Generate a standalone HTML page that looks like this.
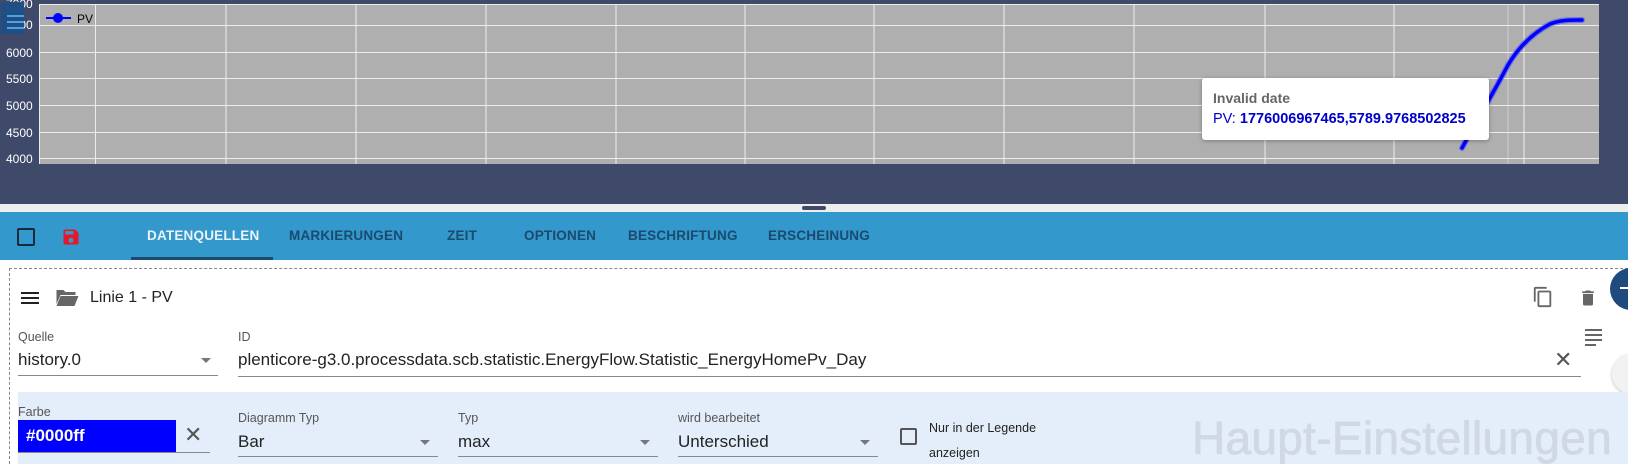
<!DOCTYPE html>
<html><head><meta charset="utf-8"><style>
*{box-sizing:border-box;margin:0;padding:0}
html,body{width:1628px;height:464px;overflow:hidden}
body{background:#fff;font-family:"Liberation Sans",Arial,sans-serif}
#w{position:relative;width:1628px;height:464px;overflow:hidden}
.a{position:absolute}
.tab{position:absolute;top:228px;font-size:13.5px;font-weight:bold;color:#1c4a6e;letter-spacing:.2px}
.lbl{position:absolute;font-size:12.5px;color:#555}
.val{position:absolute;font-size:17px;color:#222}
.ul{position:absolute;height:1px;background:#888}
.arr{position:absolute;width:0;height:0;border-left:5px solid transparent;border-right:5px solid transparent;border-top:5px solid #777}
</style></head><body><div id="w">
<div class="a" style="left:0;top:0;width:1628px;height:204px;background:#3f4a6a"></div>
<div class="a" style="left:0;top:204px;width:1628px;height:8px;background:#eeeeee"></div>
<div class="a" style="left:802px;top:206px;width:24px;height:4px;border-radius:2px;background:#3f4a6a"></div>
<svg class="a" style="left:0;top:0" width="1628" height="170">
<rect x="39" y="4" width="1560" height="160" fill="#b0afb0"/>
<g stroke="#ececec" stroke-width="1">
<line x1="39" y1="4.5" x2="1599" y2="4.5"/><line x1="39" y1="25.5" x2="1599" y2="25.5"/><line x1="39" y1="52.5" x2="1599" y2="52.5"/><line x1="39" y1="78.5" x2="1599" y2="78.5"/><line x1="39" y1="105.5" x2="1599" y2="105.5"/><line x1="39" y1="132.5" x2="1599" y2="132.5"/><line x1="39" y1="158.5" x2="1599" y2="158.5"/>
<line x1="39.5" y1="4" x2="39.5" y2="164"/>
<line x1="95.5" y1="4" x2="95.5" y2="164"/><line x1="226" y1="4" x2="226" y2="164"/><line x1="356" y1="4" x2="356" y2="164"/><line x1="486" y1="4" x2="486" y2="164"/><line x1="616" y1="4" x2="616" y2="164"/><line x1="745" y1="4" x2="745" y2="164"/><line x1="874" y1="4" x2="874" y2="164"/><line x1="1004" y1="4" x2="1004" y2="164"/><line x1="1134" y1="4" x2="1134" y2="164"/><line x1="1265" y1="4" x2="1265" y2="164"/><line x1="1394" y1="4" x2="1394" y2="164"/><line x1="1524" y1="4" x2="1524" y2="164"/><line x1="1508" y1="4" x2="1508" y2="164" stroke-opacity=".5"/>
</g>
<g fill="#fff" font-size="12" font-family="Liberation Sans,sans-serif">
<text x="6" y="8">7000</text><text x="6" y="29">6500</text><text x="6" y="57">6000</text><text x="6" y="83">5500</text><text x="6" y="110">5000</text><text x="6" y="137">4500</text><text x="6" y="163">4000</text></g>
<line x1="46" y1="18" x2="71" y2="18" stroke="#0000ff" stroke-width="2"/><circle cx="58" cy="18" r="5" fill="#0000ff"/>
<text x="77" y="23" font-size="12" fill="#000" font-family="Liberation Sans,sans-serif">PV</text>
<path d="M1462 148 C1480 115,1495 90,1508 65 C1520 45,1535 32,1550 24 C1560 20,1570 20,1582 20" fill="none" stroke="#3a3aff" stroke-opacity=".5" stroke-width="6" stroke-linecap="round"/>
<path d="M1462 148 C1480 115,1495 90,1508 65 C1520 45,1535 32,1550 24 C1560 20,1570 20,1582 20" fill="none" stroke="#0000ff" stroke-width="3.5" stroke-linecap="round"/>
<rect x="1" y="2" width="23" height="32" rx="4" fill="#1f4f85"/>
<g stroke="#4aa3df" stroke-width="2"><line x1="7" y1="16" x2="24" y2="16"/><line x1="7" y1="22" x2="24" y2="22"/><line x1="7" y1="28" x2="24" y2="28"/></g>
</svg>
<div class="a" style="left:1202px;top:78px;width:287px;height:62px;background:#fff;border-radius:3px;box-shadow:0 1px 4px rgba(0,0,0,.3)"></div>
<div class="a" style="left:1213px;top:90px;font-size:14px;font-weight:bold;color:#666">Invalid date</div>
<div class="a" style="left:1213px;top:111px;font-size:14.5px;color:#0000cc;white-space:nowrap">PV: <b>1776006967465,5789.9768502825</b></div>

<div class="a" style="left:0;top:212px;width:1628px;height:48px;background:#3398cc"></div>
<div class="a" style="left:17px;top:228px;width:18px;height:18px;border:2px solid #1a2a3a;border-radius:2px"></div>
<svg class="a" style="left:61px;top:227px" width="20" height="20" viewBox="0 0 24 24"><path fill="#e3182b" d="M17 3H5a2 2 0 0 0-2 2v14a2 2 0 0 0 2 2h14a2 2 0 0 0 2-2V7l-4-4zm-5 16a3 3 0 1 1 0-6 3 3 0 0 1 0 6zm3-10H5V5h10v4z"/></svg>
<div class="tab" style="left:147px;color:#eaf2fa">DATENQUELLEN</div>
<div class="a" style="left:131px;top:257px;width:142px;height:3px;background:#1c4a6e"></div>
<div class="tab" style="left:289px">MARKIERUNGEN</div>
<div class="tab" style="left:447px">ZEIT</div>
<div class="tab" style="left:524px">OPTIONEN</div>
<div class="tab" style="left:628px">BESCHRIFTUNG</div>
<div class="tab" style="left:768px">ERSCHEINUNG</div>

<div class="a" style="left:9px;top:268px;width:1619px;height:196px;border:1px dashed #888;border-right:none;border-bottom:none"></div>
<div class="a" style="left:21px;top:292px;width:18px;height:2px;background:#222;box-shadow:0 5px 0 #222,0 10px 0 #222"></div>
<svg class="a" style="left:54px;top:288px" width="25" height="20" viewBox="0 0 24 20"><path fill="#666" d="M2 2h7l2 2h10v3H6L2 16z M6 8h18l-4 10H2z"/></svg>
<div class="a" style="left:90px;top:289px;font-size:16px;color:#222">Linie 1 - PV</div>
<svg class="a" style="left:1532px;top:285px" width="22" height="24" viewBox="0 0 24 24"><path fill="#666" d="M16 1H4a2 2 0 0 0-2 2v14h2V3h12V1zm3 4H8a2 2 0 0 0-2 2v14a2 2 0 0 0 2 2h11a2 2 0 0 0 2-2V7a2 2 0 0 0-2-2zm0 16H8V7h11v14z"/></svg>
<svg class="a" style="left:1578px;top:287px" width="20" height="22" viewBox="0 0 24 24"><path fill="#666" d="M6 19a2 2 0 0 0 2 2h8a2 2 0 0 0 2-2V7H6v12zM19 4h-3.5l-1-1h-5l-1 1H5v2h14V4z"/></svg>
<div class="a" style="left:1610px;top:268px;width:42px;height:42px;border-radius:50%;background:#1e4a7e"></div>
<div class="a" style="left:1620px;top:287px;width:8px;height:2px;background:#fff"></div>
<div class="a" style="left:1585px;top:329px;width:17px;height:2px;background:#666;box-shadow:0 5px 0 #666,0 10px 0 #666"></div>
<div class="a" style="left:1585px;top:344px;width:11px;height:2px;background:#666"></div>
<div class="a" style="left:1612px;top:354px;width:40px;height:40px;border-radius:50%;background:#f2f2f2;box-shadow:0 1px 3px rgba(0,0,0,.25)"></div>

<div class="lbl" style="left:18px;top:330px">Quelle</div>
<div class="val" style="left:18px;top:350px">history.0</div>
<div class="arr" style="left:201px;top:358px"></div>
<div class="ul" style="left:18px;top:375px;width:200px"></div>
<div class="lbl" style="left:238px;top:330px">ID</div>
<div class="val" style="left:238px;top:350px">plenticore-g3.0.processdata.scb.statistic.EnergyFlow.Statistic_EnergyHomePv_Day</div>
<div class="a" style="left:1554px;top:350px;font-size:22px;color:#555;line-height:20px">✕</div>
<div class="ul" style="left:238px;top:376px;width:1343px"></div>

<div class="a" style="left:18px;top:392px;width:1610px;height:72px;background:#e3eefa"></div>
<div class="a" style="left:1192px;top:412px;font-size:46px;line-height:52px;color:#cfd8e3;white-space:nowrap;letter-spacing:.3px;-webkit-text-stroke:0.8px #cfd8e3">Haupt-Einstellungen</div>
<div class="lbl" style="left:18px;top:405px">Farbe</div>
<div class="a" style="left:18px;top:420px;width:158px;height:32px;background:#0000ff"></div>
<div class="a" style="left:26px;top:426px;font-size:17px;color:#fff;font-weight:bold">#0000ff</div>
<div class="a" style="left:184px;top:424px;font-size:22px;color:#555;line-height:22px">✕</div>
<div class="ul" style="left:18px;top:452px;width:192px"></div>
<div class="lbl" style="left:238px;top:411px">Diagramm Typ</div>
<div class="val" style="left:238px;top:432px">Bar</div>
<div class="arr" style="left:420px;top:440px"></div>
<div class="ul" style="left:238px;top:456px;width:200px"></div>
<div class="lbl" style="left:458px;top:411px">Typ</div>
<div class="val" style="left:458px;top:432px">max</div>
<div class="arr" style="left:640px;top:440px"></div>
<div class="ul" style="left:458px;top:456px;width:200px"></div>
<div class="lbl" style="left:678px;top:411px">wird bearbeitet</div>
<div class="val" style="left:678px;top:432px">Unterschied</div>
<div class="arr" style="left:860px;top:440px"></div>
<div class="ul" style="left:678px;top:456px;width:200px"></div>
<div class="a" style="left:900px;top:428px;width:17px;height:17px;border:2px solid #555;border-radius:2px"></div>
<div class="a" style="left:929px;top:421px;font-size:12.5px;color:#222">Nur in der Legende</div>
<div class="a" style="left:929px;top:446px;font-size:12.5px;color:#222">anzeigen</div>
</div></body></html>
